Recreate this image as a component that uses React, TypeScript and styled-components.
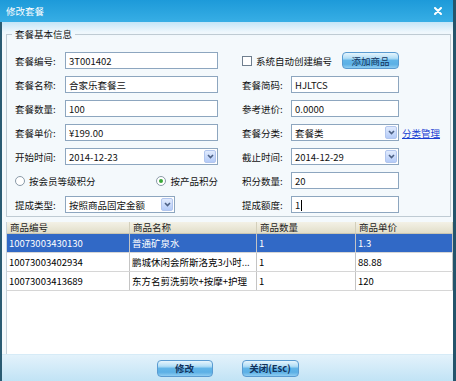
import React from "react";
import styled, { createGlobalStyle } from "styled-components";

const GlobalStyle = createGlobalStyle`
  html, body {
    margin: 0;
    padding: 0;
  }
  body {
    width: 456px;
    height: 381px;
    overflow: hidden;
    font-family: "Noto Sans CJK SC", "Liberation Sans", sans-serif;
    font-size: 9.5px;
    color: #111;
  }
`;

const Window = styled.div`
  width: 456px;
  height: 381px;
  display: flex;
  flex-direction: column;
`;

const TitleBar = styled.div`
  flex: none;
  height: 22px;
  box-sizing: border-box;
  display: flex;
  align-items: center;
  justify-content: space-between;
  padding: 0 11px 0 6px;
  background: linear-gradient(#1d9ad9, #37aee5);
  border-right: 3px solid #24546b;
  color: #fff;
`;

const Body = styled.div`
  flex: 1;
  min-height: 0;
  display: flex;
  flex-direction: column;
  border-left: 2px solid #2a5b72;
  border-right: 3px solid #24546b;
  background: linear-gradient(#c4e5f7 0, #eef7fc 10px, #f4f9fc 16px);
`;

const Content = styled.div`
  flex: 1;
  min-height: 0;
  display: flex;
  flex-direction: column;
  padding: 6px 2px 0 4px;
`;

const Group = styled.fieldset`
  margin: 0;
  padding: 11px 0 3px 8px;
  border: 1px solid #bfcbd3;
`;

const Legend = styled.legend`
  margin-left: -3px;
  padding: 0 3px;
  line-height: 13px;
`;

const Rows = styled.div`
  display: flex;
  flex-direction: column;
  gap: 7px;
`;

const FormRow = styled.div`
  display: flex;
  align-items: center;
  height: 17px;
`;

const Half = styled.div<{ $w?: number }>`
  flex: none;
  display: flex;
  align-items: center;
  height: 100%;
  width: ${(p) => (p.$w ? `${p.$w}px` : "auto")};
`;

const Label = styled.div<{ $w: number }>`
  flex: none;
  width: ${(p) => p.$w}px;
  white-space: nowrap;
`;

const Field = styled.div<{ $w: number }>`
  flex: none;
  box-sizing: border-box;
  width: ${(p) => p.$w}px;
  height: 17px;
  display: flex;
  align-items: center;
  justify-content: space-between;
  padding: 0 1px 0 3px;
  border: 1px solid #8da6bf;
  background: #fff;
  white-space: nowrap;
`;

const Caret = styled.span`
  display: inline-block;
  width: 1px;
  height: 11px;
  margin-left: 1px;
  background: #000;
  vertical-align: middle;
`;

const DropBtn = styled.span`
  flex: none;
  box-sizing: border-box;
  width: 12px;
  height: 13px;
  display: flex;
  align-items: center;
  justify-content: center;
  border: 1px solid #b2c6ee;
  border-radius: 2px;
  background: linear-gradient(#e1ebfd, #b4cbf8);
`;

const CheckLine = styled.div`
  display: flex;
  align-items: center;
  justify-content: space-between;
  width: 157px;
`;

const Check = styled.span`
  display: flex;
  align-items: center;
  white-space: nowrap;
`;

const Box = styled.span`
  box-sizing: border-box;
  width: 10px;
  height: 10px;
  margin-right: 4px;
  border: 1px solid #6f7f8f;
  background: #fff;
`;

const RadioGroup = styled.div`
  display: flex;
  align-items: center;
  justify-content: space-between;
  width: 203px;
`;

const RadioItem = styled.span`
  display: flex;
  align-items: center;
  white-space: nowrap;
`;

const Radio = styled.span<{ $checked?: boolean }>`
  box-sizing: border-box;
  width: 10px;
  height: 10px;
  margin-right: 4px;
  border-radius: 50%;
  border: 1px solid #8a9aa8;
  background: #fff;
  display: flex;
  align-items: center;
  justify-content: center;
  &::after {
    content: "";
    width: 4px;
    height: 4px;
    border-radius: 50%;
    background: ${(p) => (p.$checked ? "#39a839" : "transparent")};
  }
`;

const Button = styled.div<{ $w: number; $bold?: boolean }>`
  box-sizing: border-box;
  width: ${(p) => p.$w}px;
  height: 17px;
  display: flex;
  align-items: center;
  justify-content: center;
  border: 1px solid #5a9bd1;
  border-radius: 4px;
  background: linear-gradient(#e6f5fd 0%, #b2def6 35%, #62b5e8 50%, #5cb0e5 75%, #8fcdf2 100%);
  color: #12325c;
  font-weight: ${(p) => (p.$bold ? 700 : 400)};
  white-space: nowrap;
`;

const LinkText = styled.a`
  margin-left: 3px;
  color: #1a3fd2;
  text-decoration: underline;
  white-space: nowrap;
`;

const COLS = "123px 127px 99px 1fr";

const Table = styled.div`
  flex: 1;
  margin: 5px -2px 0 0;
  background: #fff;
  border-left: 1px solid #c6d2da;
`;

const HeadRow = styled.div`
  display: grid;
  grid-template-columns: ${COLS};
  height: 12px;
  box-sizing: border-box;
  background: linear-gradient(#f3f1e6, #e2dec9);
  border-bottom: 1px solid #c9c5b1;
`;

const HeadCell = styled.div`
  padding-left: 3px;
  line-height: 11px;
  border-right: 1px solid #d3cfbb;
  color: #222;
  white-space: nowrap;
`;

const DataRow = styled.div<{ $selected?: boolean }>`
  display: grid;
  grid-template-columns: ${COLS};
  height: 19px;
  box-sizing: border-box;
  border-bottom: 1px solid #d6d6d6;
  background: ${(p) => (p.$selected ? "#3169c6" : "#fff")};
  color: ${(p) => (p.$selected ? "#fff" : "#000")};
`;

const Cell = styled.div`
  padding-left: 2px;
  line-height: 18px;
  border-right: 1px solid #c4c4c4;
  white-space: nowrap;
  overflow: hidden;
`;

const Footer = styled.div`
  flex: none;
  height: 27px;
  box-sizing: border-box;
  display: flex;
  align-items: center;
  justify-content: center;
  gap: 29px;
  border-top: 1px solid #d6ebf7;
  background: linear-gradient(#e3f2fb, #c1e3f5);
`;

const Chevron = () => (
  <svg width="7" height="5" viewBox="0 0 7 5">
    <path d="M1 1 L3.5 3.5 L6 1" stroke="#4d6185" strokeWidth="1.6" fill="none" />
  </svg>
);

const CloseIcon = () => (
  <svg width="8" height="8" viewBox="0 0 8 8">
    <path d="M1 1 L7 7 M7 1 L1 7" stroke="#fff" strokeWidth="2" strokeLinecap="round" />
  </svg>
);

const Select: React.FC<{ w: number; value: string }> = ({ w, value }) => (
  <Field $w={w}>
    <span>{value}</span>
    <DropBtn>
      <Chevron />
    </DropBtn>
  </Field>
);

const items = [
  { code: "10073003430130", name: "普通矿泉水", qty: "1", price: "1.3" },
  { code: "10073003402934", name: "鹏城休闲会所斯洛克3小时...", qty: "1", price: "88.88" },
  { code: "10073003413689", name: "东方名剪洗剪吹+按摩+护理", qty: "1", price: "120" },
];

export default function App() {
  return (
    <Window>
      <GlobalStyle />
      <TitleBar>
        <span>修改套餐</span>
        <CloseIcon />
      </TitleBar>
      <Body>
        <Content>
          <Group>
            <Legend>套餐基本信息</Legend>
            <Rows>
              <FormRow>
                <Half $w={227}>
                  <Label $w={50}>套餐编号:</Label>
                  <Field $w={153}>3T001402</Field>
                </Half>
                <Half>
                  <CheckLine>
                    <Check>
                      <Box />
                      系统自动创建编号
                    </Check>
                    <Button $w={57}>添加商品</Button>
                  </CheckLine>
                </Half>
              </FormRow>
              <FormRow>
                <Half $w={227}>
                  <Label $w={50}>套餐名称:</Label>
                  <Field $w={153}>合家乐套餐三</Field>
                </Half>
                <Half>
                  <Label $w={49}>套餐简码:</Label>
                  <Field $w={108}>HJLTCS</Field>
                </Half>
              </FormRow>
              <FormRow>
                <Half $w={227}>
                  <Label $w={50}>套餐数量:</Label>
                  <Field $w={153}>100</Field>
                </Half>
                <Half>
                  <Label $w={49}>参考进价:</Label>
                  <Field $w={108}>0.0000</Field>
                </Half>
              </FormRow>
              <FormRow>
                <Half $w={227}>
                  <Label $w={50}>套餐单价:</Label>
                  <Field $w={153}>¥199.00</Field>
                </Half>
                <Half>
                  <Label $w={49}>套餐分类:</Label>
                  <Select w={108} value="套餐类" />
                  <LinkText>分类管理</LinkText>
                </Half>
              </FormRow>
              <FormRow>
                <Half $w={227}>
                  <Label $w={50}>开始时间:</Label>
                  <Select w={153} value="2014-12-23" />
                </Half>
                <Half>
                  <Label $w={49}>截止时间:</Label>
                  <Select w={108} value="2014-12-29" />
                </Half>
              </FormRow>
              <FormRow>
                <Half $w={227}>
                  <RadioGroup>
                    <RadioItem>
                      <Radio />
                      按会员等级积分
                    </RadioItem>
                    <RadioItem>
                      <Radio $checked />
                      按产品积分
                    </RadioItem>
                  </RadioGroup>
                </Half>
                <Half>
                  <Label $w={49}>积分数量:</Label>
                  <Field $w={108}>20</Field>
                </Half>
              </FormRow>
              <FormRow>
                <Half $w={227}>
                  <Label $w={50}>提成类型:</Label>
                  <Select w={110} value="按照商品固定金额" />
                </Half>
                <Half>
                  <Label $w={49}>提成额度:</Label>
                  <Field $w={108}>
                    <span>
                      1<Caret />
                    </span>
                  </Field>
                </Half>
              </FormRow>
            </Rows>
          </Group>
          <Table>
            <HeadRow>
              <HeadCell>商品编号</HeadCell>
              <HeadCell>商品名称</HeadCell>
              <HeadCell>商品数量</HeadCell>
              <HeadCell>商品单价</HeadCell>
            </HeadRow>
            {items.map((item, i) => (
              <DataRow key={item.code} $selected={i === 0}>
                <Cell>{item.code}</Cell>
                <Cell>{item.name}</Cell>
                <Cell>{item.qty}</Cell>
                <Cell>{item.price}</Cell>
              </DataRow>
            ))}
          </Table>
        </Content>
        <Footer>
          <Button $w={56} $bold>
            修改
          </Button>
          <Button $w={57} $bold>
            关闭(Esc)
          </Button>
        </Footer>
      </Body>
    </Window>
  );
}
